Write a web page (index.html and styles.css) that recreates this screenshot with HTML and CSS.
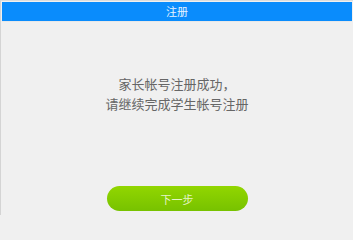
FILE: index.html
```html
<!DOCTYPE html>
<html lang="zh">
<head>
<meta charset="utf-8">
<link rel="stylesheet" href="styles.css">
</head>
<body>
<div class="frame">
  <div class="header">注册</div>
  <div class="content">
    <p class="msg">家长帐号注册成功，<br>请继续完成学生帐号注册</p>
    <button class="next">下一步</button>
  </div>
</div>
</body>
</html>
```
FILE: styles.css
```css
html, body {
  margin: 0;
  padding: 0;
  background: #f0f0f0;
  font-family: "Noto Sans CJK SC", "Noto Sans", sans-serif;
}
.frame {
  box-sizing: border-box;
  width: 353px;
  height: 215px;
  border-top: 1px solid #dcdcdc;
  border-left: 1px solid #d4d4d4;
  padding: 1px 1px 0 1px;
  display: flex;
  flex-direction: column;
}
.header {
  height: 19px;
  background: #0a8cfc;
  color: #e8f3ff;
  font-size: 11px;
  line-height: 19px;
  text-align: center;
}
.content {
  flex: 1;
  display: flex;
  flex-direction: column;
  align-items: center;
  border-top: 1px solid #e8e8e8;
}
.msg {
  margin: 52px 0 0 0;
  font-size: 13px;
  line-height: 20px;
  color: #666666;
  text-align: center;
}
.next {
  margin-top: 72px;
  width: 141px;
  height: 25px;
  border: none;
  border-radius: 13px;
  background: linear-gradient(#92d600, #77c200);
  color: #e6f5c8;
  font-family: inherit;
  font-size: 11px;
  padding: 0;
}
```
